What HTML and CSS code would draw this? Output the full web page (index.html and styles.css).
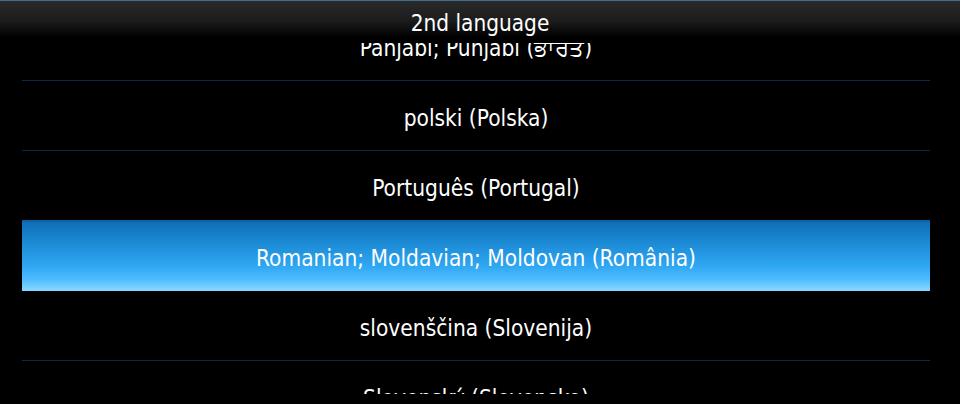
FILE: index.html
```html
<!DOCTYPE html>
<html>
<head>
<meta charset="utf-8">
<link rel="stylesheet" href="styles.css">
</head>
<body>
<div class="screen">
  <header class="title-bar">2nd language</header>
  <div class="viewport">
    <ul class="list">
      <li class="row">Panjabi; Punjabi (ਭਾਰਤ)</li>
      <li class="row">polski (Polska)</li>
      <li class="row">Português (Portugal)</li>
      <li class="row selected">Romanian; Moldavian; Moldovan (România)</li>
      <li class="row">slovenščina (Slovenija)</li>
      <li class="row">Slovenský (Slovensko)</li>
    </ul>
  </div>
</div>
</body>
</html>
```

FILE: styles.css
```css
html, body {
  margin: 0;
  padding: 0;
  background: #000;
}
.screen {
  width: 960px;
  height: 404px;
  background: #000;
  color: #fff;
  font-family: "DejaVu Sans Condensed", "Liberation Sans", sans-serif;
  overflow: hidden;
}
.title-bar {
  height: 36px;
  border-top: 1px solid #3f6d8e;
  background: linear-gradient(#2a2a2a 0%, #1c1c1c 55%, #000 100%);
  text-align: center;
  font-size: 22.4px;
  line-height: 44px;
}
.viewport {
  margin-top: 6px;
  height: 351px;
  overflow: hidden;
  padding: 0 30px 0 22px;
}
.list {
  list-style: none;
  margin: -32px 0 0 0;
  padding: 0;
}
.row {
  height: 69px;
  border-bottom: 1px solid #0a2a48;
  text-align: center;
  font-size: 22.5px;
  line-height: 74px;
  white-space: nowrap;
}
.row.selected {
  position: relative;
  margin-top: -1px;
  height: 70px;
  line-height: 76px;
  border-bottom-color: #82d6ff;
  background: linear-gradient(#0a5c9c 0%, #106fb8 4%, #1b88d2 30%, #2ea6f2 65%, #4fbcff 85%, #86d8ff 100%);
}
```
